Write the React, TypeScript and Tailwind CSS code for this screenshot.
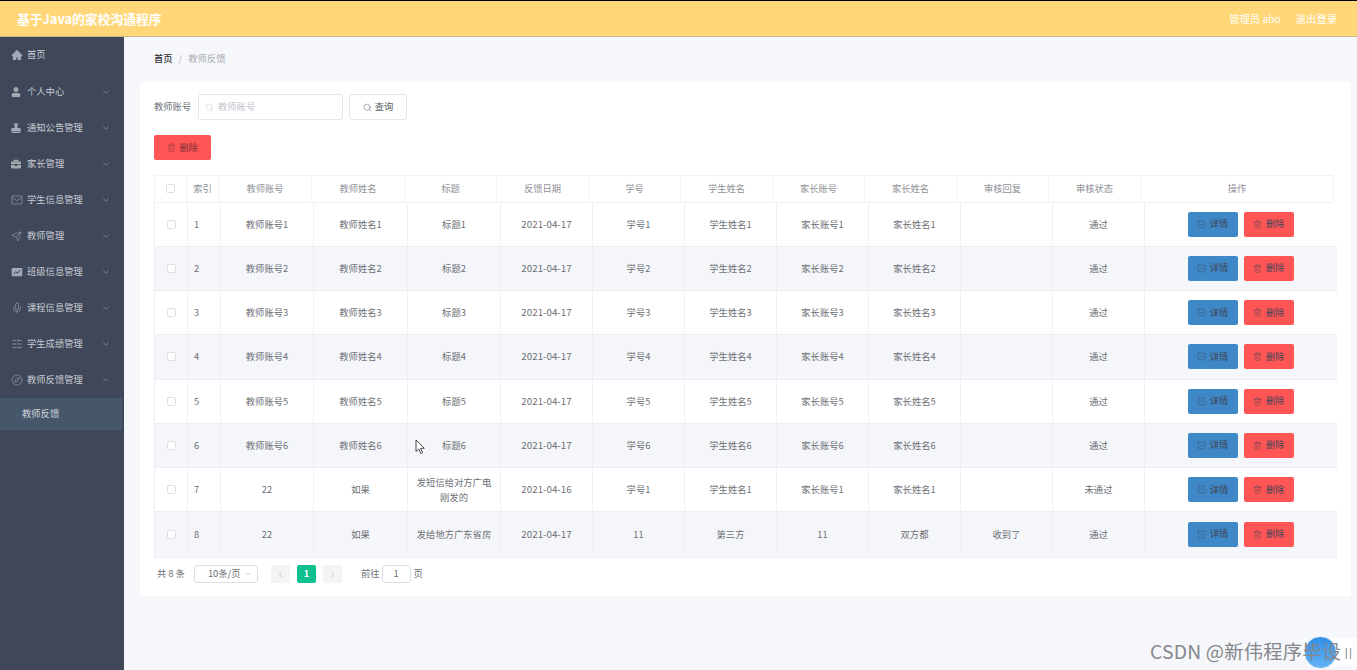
import React from "react";
import { AiFillHome, AiFillFund } from "react-icons/ai";
import { FaUser, FaBriefcase, FaStamp } from "react-icons/fa";
import { ChevronDown, ChevronUp, ChevronLeft, ChevronRight, Mail, Send, Mic, SlidersHorizontal, Compass, Search, Trash2, SquareDot } from "lucide-react";

const font = { fontFamily: '"Noto Sans CJK SC", "Noto Sans", sans-serif' };

const menu = [
	{ name: "首页", icon: <AiFillHome size={12} /> },
	{ name: "个人中心", icon: <FaUser size={10} />, arrow: true },
	{ name: "通知公告管理", icon: <FaStamp size={10} />, arrow: true },
	{ name: "家长管理", icon: <FaBriefcase size={10} />, arrow: true },
	{ name: "学生信息管理", icon: <Mail size={12} strokeWidth={1.2} />, arrow: true },
	{ name: "教师管理", icon: <Send size={11} strokeWidth={1.2} />, arrow: true },
	{ name: "班级信息管理", icon: <AiFillFund size={12} />, arrow: true },
	{ name: "课程信息管理", icon: <Mic size={12} strokeWidth={1.2} />, arrow: true },
	{ name: "学生成绩管理", icon: <SlidersHorizontal size={12} strokeWidth={1.2} />, arrow: true },
	{ name: "教师反馈管理", icon: <Compass size={12} strokeWidth={1.2} />, arrow: true, open: true },
];

const heads = ["索引", "教师账号", "教师姓名", "标题", "反馈日期", "学号", "学生姓名", "家长账号", "家长姓名", "审核回复", "审核状态", "操作"];

const rows = [
	["1", "教师账号1", "教师姓名1", "标题1", "2021-04-17", "学号1", "学生姓名1", "家长账号1", "家长姓名1", "", "通过"],
	["2", "教师账号2", "教师姓名2", "标题2", "2021-04-17", "学号2", "学生姓名2", "家长账号2", "家长姓名2", "", "通过"],
	["3", "教师账号3", "教师姓名3", "标题3", "2021-04-17", "学号3", "学生姓名3", "家长账号3", "家长姓名3", "", "通过"],
	["4", "教师账号4", "教师姓名4", "标题4", "2021-04-17", "学号4", "学生姓名4", "家长账号4", "家长姓名4", "", "通过"],
	["5", "教师账号5", "教师姓名5", "标题5", "2021-04-17", "学号5", "学生姓名5", "家长账号5", "家长姓名5", "", "通过"],
	["6", "教师账号6", "教师姓名6", "标题6", "2021-04-17", "学号6", "学生姓名6", "家长账号6", "家长姓名6", "", "通过"],
	["7", "22", "如果", "发短信给对方广电刚发的", "2021-04-16", "学号1", "学生姓名1", "家长账号1", "家长姓名1", "", "未通过"],
	["8", "22", "如果", "发给地方广东省房", "2021-04-17", "11", "第三方", "11", "双方都", "收到了", "通过"],
];

function Check() {
	return <span className="block w-[9px] h-[9px] rounded-[2px] border border-[#dcdfe6] bg-white" />;
}

function Btn({ color, label, icon }: { color: string; label: string; icon: React.ReactNode }) {
	return (
		<span className={`flex items-center justify-center gap-[4px] w-[50px] h-[25px] rounded-[2px] text-[9.3px] text-[#3f4658] ${color}`}>
			{icon}
			{label}
		</span>
	);
}

export default function App() {
	return (
		<div className="flex flex-col h-[670px] w-[1357px] overflow-hidden relative bg-[#f6f7fa] text-[9.3px] text-[#6c6f75]" style={font}>
			<header className="h-[37px] shrink-0 flex items-center justify-between border-t border-black border-b border-b-[#c9b78a] bg-[#ffd778] pl-[17px] pr-[20px] text-white">
				<span className="text-[12.8px] font-bold">基于Java的家校沟通程序</span>
				<div className="flex gap-[15px] text-[10.3px]">
					<span>管理员 abo</span>
					<span>退出登录</span>
				</div>
			</header>
			<div className="flex flex-1 min-h-0">
				<aside className="w-[124px] shrink-0 bg-[#3f4759] text-[#c9ccd3]">
					{menu.map((m, i) => (
						<div key={m.name} className={`flex items-center pl-[11px] pr-[13px] ${i === 0 ? "h-[37px] pb-[1px]" : "h-[36px]"}`}>
							<span className="w-[16px] flex text-[#a3a8b2]">{m.icon}</span>
							<span className="flex-1">{m.name}</span>
							{m.arrow && (m.open ? <ChevronUp size={10} strokeWidth={1} /> : <ChevronDown size={10} strokeWidth={1} />)}
						</div>
					))}
					<div className="h-[32px] w-[122px] flex items-center pl-[22px] bg-[#46566b] text-[#d4d7dc]">教师反馈</div>
				</aside>
				<main className="flex-1 min-w-0 pl-[16px] pr-[6px]">
					<div className="h-[45px] flex items-center pl-[14px] gap-[6px] pb-[1px]">
						<span className="text-[#303133] font-medium">首页</span>
						<span className="text-[#b5b8bd]">/</span>
						<span className="text-[#a8abb2]">教师反馈</span>
					</div>
					<section className="h-[514px] bg-white rounded-[2px] pl-[14px] pt-[12px]">
						<div className="flex items-center h-[26px]">
							<span className="w-[44px]">教师账号</span>
							<span className="w-[145px] h-[26px] flex items-center gap-[4px] px-[6px] rounded-[3px] border border-[#e4e6eb] text-[#c0c4cc]">
								<Search size={9} strokeWidth={1.3} />
								教师账号
							</span>
							<span className="ml-[6px] w-[58px] h-[26px] flex items-center justify-center gap-[3px] rounded-[3px] border border-[#e4e6eb] text-[#5c6066]">
								<Search size={9} strokeWidth={1.3} />
								查询
							</span>
						</div>
						<div className="mt-[15px] w-[57px] h-[25px] flex items-center justify-center gap-[3px] rounded-[2px] bg-[#ff5555] text-[#7e3238]">
							<Trash2 size={9} strokeWidth={1.2} />
							删除
						</div>
						<div className="mt-[15px] grid grid-cols-[33px_32px_93px_93px_92px_92px_92px_92px_92px_92px_92px_92px_193px] w-[1179px] h-[27.5px] border-b border-[#eef0f3] border-t border-t-[#f2f3f5] text-[#8f9196]">
							<div className="flex items-center justify-center border-x border-[#f2f3f5]"><Check /></div>
							{heads.map((h) => (
								<div key={h} className="flex items-center justify-center border-r border-[#f2f3f5]">{h}</div>
							))}
						</div>
						<div className="w-[1183px] border-b border-l border-[#ebeef5]">
							{rows.map((r, i) => (
								<div key={r[0]} className={`grid grid-cols-[33px_33px_93px_94px_93px_92px_92px_92px_92px_92px_92px_92px_193px] h-[44.25px] border-b border-[#ebeef5] last:border-b-0 ${i % 2 === 1 ? "bg-[#f5f6fa]" : "bg-white"}`}>
									<div className="flex items-center justify-center border-r border-[#f0f1f4]"><Check /></div>
									{r.map((c, j) => (
										<div key={j} className={`flex items-center border-r border-[#f0f1f4] text-center leading-[15px] ${j === 0 ? "pl-[6px]" : "justify-center px-[6px]"} ${j === 4 ? "text-[9.8px]" : ""}`}>{c}</div>
									))}
									<div className="flex items-center justify-center gap-[6px] pr-[2px]">
										<Btn color="bg-[#3f88c8]" label="详情" icon={<SquareDot size={9} strokeWidth={1.2} />} />
										<Btn color="bg-[#ff5555]" label="删除" icon={<Trash2 size={9} strokeWidth={1.2} />} />
									</div>
								</div>
							))}
						</div>
						<div className="mt-[7.5px] flex items-center h-[18px] pl-[3px]">
							<span>共 8 条</span>
							<span className="ml-[9px] w-[64px] h-[18px] flex items-center justify-between pl-[13px] pr-[5px] rounded-[3px] border border-[#dcdfe6]">
								10条/页
								<ChevronDown size={8} strokeWidth={1} />
							</span>
							<span className="ml-[13px] w-[19px] h-[18px] flex items-center justify-center rounded-[2px] bg-[#f4f4f5] text-[#b9bcc2]"><ChevronLeft size={9} /></span>
							<span className="ml-[7px] w-[19px] h-[18px] flex items-center justify-center rounded-[2px] bg-[#0ec08d] text-white font-bold">1</span>
							<span className="ml-[7px] w-[19px] h-[18px] flex items-center justify-center rounded-[2px] bg-[#f4f4f5] text-[#b9bcc2]"><ChevronRight size={9} /></span>
							<span className="ml-[19px]">前往</span>
							<span className="ml-[2px] w-[29px] h-[18px] flex items-center justify-center rounded-[3px] border border-[#dcdfe6]">1</span>
							<span className="ml-[3px]">页</span>
						</div>
					</section>
				</main>
			</div>
			<svg className="absolute left-[415px] top-[439px]" width="11" height="16" viewBox="0 0 11 16">
				<path d="M1 1 L1 12.5 L3.8 10 L5.8 14.5 L7.6 13.7 L5.6 9.4 L9.3 9.2 Z" fill="#fff" stroke="#333" strokeWidth="0.9" />
			</svg>
			<div className="absolute left-[1321px] top-[638px] w-[36px] h-[29px] bg-white rounded-l-[14px]" />
			<div className="absolute left-[1304px] top-[636px] w-[33px] h-[33px] rounded-full bg-gradient-to-b from-[#2f8fe8] to-[#63b4f5] border border-[#dfeaf5]" />
			<div className="absolute left-[1150px] top-[637px] text-[19.3px] leading-[28px] tracking-[0.2px] text-[#85878c] whitespace-nowrap">CSDN @新伟程序毕设<span className="ml-[3px] text-[15px] font-light">II</span></div>
		</div>
	);
}
